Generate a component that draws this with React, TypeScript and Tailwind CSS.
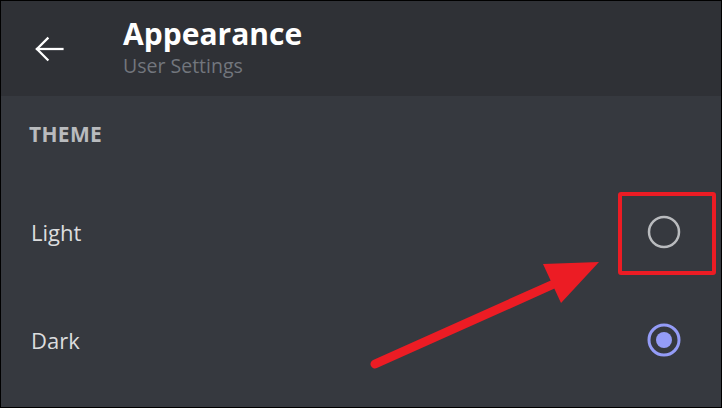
import React from 'react';

const font = { fontFamily: '"Open Sans", "Noto Sans", sans-serif' };

function Radio({ checked }: { checked: boolean }) {
  if (checked) {
    return (
      <svg width="36" height="36" viewBox="0 0 36 36">
        <circle cx="18" cy="18" r="15" fill="none" stroke="#949cf7" strokeWidth="3" />
        <circle cx="18" cy="18" r="8" fill="#949cf7" />
      </svg>
    );
  }
  return (
    <svg width="36" height="36" viewBox="0 0 36 36">
      <circle cx="18" cy="18" r="15" fill="none" stroke="#b9bbbe" strokeWidth="2.5" />
    </svg>
  );
}

export default function App() {
  const themes = [
    { name: 'Light', checked: false },
    { name: 'Dark', checked: true },
  ];

  return (
    <div className="relative w-[722px] h-[408px] border border-black bg-[#36393f] overflow-hidden" style={font}>
      {/* Header */}
      <div className="flex items-center h-[95px] bg-[#2f3136]">
        <div className="w-[122px] pl-[31px] flex items-center">
          <svg width="34" height="34" viewBox="0 0 24 24" fill="none" stroke="#ffffff" strokeWidth="1.6" strokeLinecap="square">
            <path d="M21.5 12H3.5" />
            <path d="M11 4.5L3.5 12L11 19.5" />
          </svg>
        </div>
        <div className="flex flex-col self-start pt-[16px]">
          <span className="text-[30px] font-bold text-white leading-[34px]">Appearance</span>
          <span className="mt-[2px] text-[19.5px] text-[#72767d] leading-[26px]">User Settings</span>
        </div>
      </div>

      {/* Body */}
      <div className="flex flex-col pt-[24px]">
        <div className="pl-[28px] h-[28px] flex items-center">
          <span className="text-[21px] font-bold text-[#b9bbbe] leading-none tracking-[0.3px]">THEME</span>
        </div>
        <div className="flex flex-col pt-[30px]">
          {themes.map((t) => (
            <div key={t.name} className="flex items-center justify-between h-[108px] pl-[30px] pr-[39px]">
              <span className="text-[22px] text-[#dcddde]">{t.name}</span>
              <Radio checked={t.checked} />
            </div>
          ))}
        </div>
      </div>

      {/* Annotation overlay */}
      <svg className="absolute inset-0 pointer-events-none" width="722" height="408" viewBox="0 0 722 408">
        <rect x="619" y="193" width="94" height="79" fill="none" stroke="#ec1c24" strokeWidth="4" rx="1" />
        <line x1="374" y1="363" x2="555" y2="282" stroke="#ec1c24" strokeWidth="9" strokeLinecap="round" />
        <polygon points="598,261 542,263 560,302" fill="#ec1c24" />
      </svg>
    </div>
  );
}
